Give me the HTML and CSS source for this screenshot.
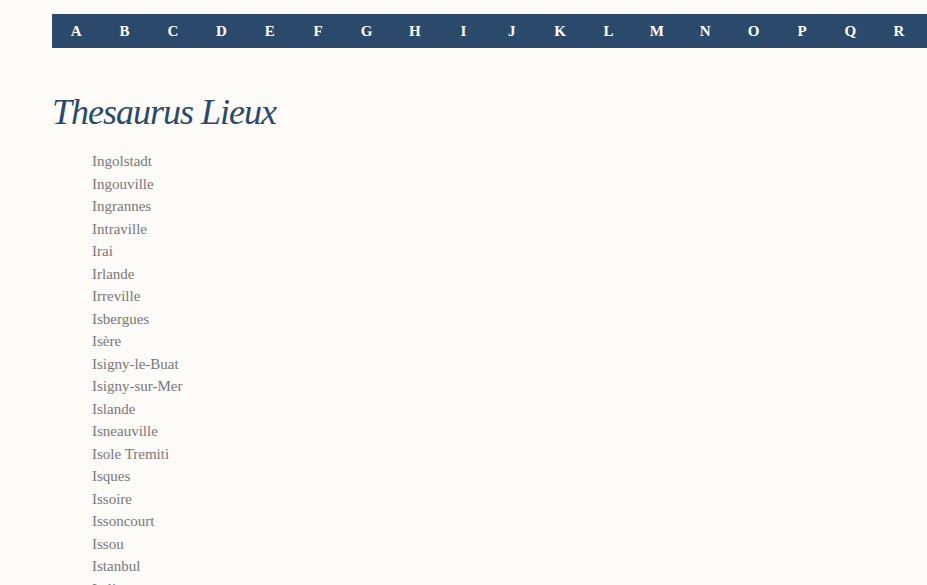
FILE: index.html
```html
<!DOCTYPE html>
<html lang="fr">
<head>
<meta charset="utf-8">
<title>Thesaurus Lieux</title>
<link rel="stylesheet" href="styles.css">
</head>
<body>
<nav class="alpha">
  <a href="#">A</a><a href="#">B</a><a href="#">C</a><a href="#">D</a><a href="#">E</a><a href="#">F</a><a href="#">G</a><a href="#">H</a><a href="#">I</a><a href="#">J</a><a href="#">K</a><a href="#">L</a><a href="#">M</a><a href="#">N</a><a href="#">O</a><a href="#">P</a><a href="#">Q</a><a href="#">R</a>
</nav>
<main class="content">
  <h1 class="title">Thesaurus Lieux</h1>
  <ul class="places">
    <li>Ingolstadt</li>
    <li>Ingouville</li>
    <li>Ingrannes</li>
    <li>Intraville</li>
    <li>Irai</li>
    <li>Irlande</li>
    <li>Irreville</li>
    <li>Isbergues</li>
    <li>Isère</li>
    <li>Isigny-le-Buat</li>
    <li>Isigny-sur-Mer</li>
    <li>Islande</li>
    <li>Isneauville</li>
    <li>Isole Tremiti</li>
    <li>Isques</li>
    <li>Issoire</li>
    <li>Issoncourt</li>
    <li>Issou</li>
    <li>Istanbul</li>
    <li>Italie</li>
  </ul>
</main>
</body>
</html>
```
FILE: styles.css
```css
html, body {
  overflow: hidden;
}
body {
  margin: 0;
  padding: 14px 0 0 52px;
  background: #fcfbf8;
  font-family: "Liberation Serif", "DejaVu Serif", serif;
}
.alpha {
  display: flex;
  height: 34px;
  background: #2b4a6b;
}
.alpha a {
  flex: 0 0 48.4px;
  display: flex;
  align-items: center;
  justify-content: center;
  color: #ffffff;
  text-decoration: none;
  font-weight: bold;
  font-size: 15px;
}
.title {
  margin: 42px 0 0;
  font-weight: normal;
  font-style: italic;
  font-size: 36px;
  letter-spacing: -1px;
  line-height: 44px;
  color: #2b4a6b;
}
.places {
  list-style: none;
  margin: 16px 0 0;
  padding: 0 0 0 40px;
}
.places li {
  font-size: 15px;
  line-height: 22.5px;
  color: #7b7679;
}
```
